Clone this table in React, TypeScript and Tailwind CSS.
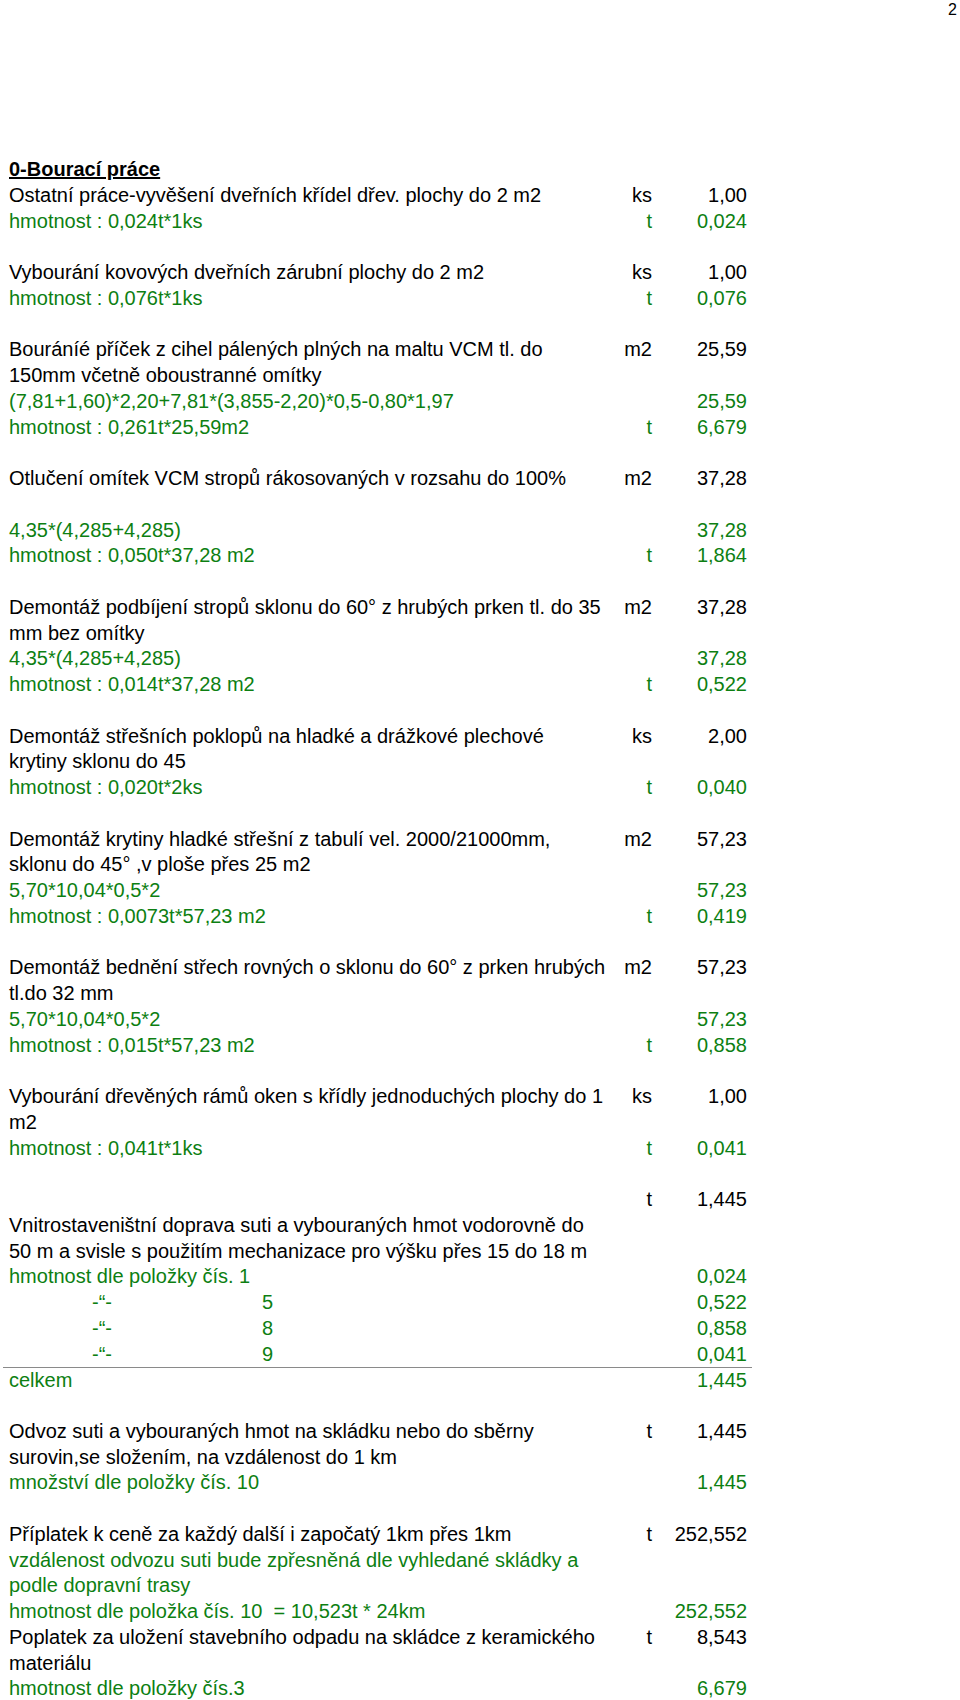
import React from 'react';

interface Row {
  t?: React.ReactNode;
  u?: string;
  v?: string;
  g?: boolean;
  total?: boolean;
}

const ditto = (n: string) => (
  <span className="flex">
    <span className="ml-[83px] w-[170px]">-“-</span>
    <span>{n}</span>
  </span>
);

const blocks: Row[][] = [
  [
    { t: 'Ostatní práce-vyvěšení dveřních křídel dřev. plochy do 2 m2', u: 'ks', v: '1,00' },
    { t: 'hmotnost : 0,024t*1ks', u: 't', v: '0,024', g: true },
  ],
  [
    { t: 'Vybourání kovových dveřních zárubní plochy do 2 m2', u: 'ks', v: '1,00' },
    { t: 'hmotnost : 0,076t*1ks', u: 't', v: '0,076', g: true },
  ],
  [
    { t: 'Bouráníé příček z cihel pálených plných na maltu VCM tl. do', u: 'm2', v: '25,59' },
    { t: '150mm včetně oboustranné omítky' },
    { t: '(7,81+1,60)*2,20+7,81*(3,855-2,20)*0,5-0,80*1,97', v: '25,59', g: true },
    { t: 'hmotnost : 0,261t*25,59m2', u: 't', v: '6,679', g: true },
  ],
  [
    { t: 'Otlučení omítek VCM stropů rákosovaných v rozsahu do 100%', u: 'm2', v: '37,28' },
    {},
    { t: '4,35*(4,285+4,285)', v: '37,28', g: true },
    { t: 'hmotnost : 0,050t*37,28 m2', u: 't', v: '1,864', g: true },
  ],
  [
    { t: 'Demontáž podbíjení stropů sklonu do 60° z hrubých prken tl. do 35', u: 'm2', v: '37,28' },
    { t: 'mm bez omítky' },
    { t: '4,35*(4,285+4,285)', v: '37,28', g: true },
    { t: 'hmotnost : 0,014t*37,28 m2', u: 't', v: '0,522', g: true },
  ],
  [
    { t: 'Demontáž střešních poklopů na hladké a drážkové plechové', u: 'ks', v: '2,00' },
    { t: 'krytiny sklonu do 45' },
    { t: 'hmotnost : 0,020t*2ks', u: 't', v: '0,040', g: true },
  ],
  [
    { t: 'Demontáž krytiny hladké střešní z tabulí vel. 2000/21000mm,', u: 'm2', v: '57,23' },
    { t: 'sklonu do 45° ,v ploše přes 25 m2' },
    { t: '5,70*10,04*0,5*2', v: '57,23', g: true },
    { t: 'hmotnost : 0,0073t*57,23 m2', u: 't', v: '0,419', g: true },
  ],
  [
    { t: 'Demontáž bednění střech rovných o sklonu do 60° z prken hrubých', u: 'm2', v: '57,23' },
    { t: 'tl.do 32 mm' },
    { t: '5,70*10,04*0,5*2', v: '57,23', g: true },
    { t: 'hmotnost : 0,015t*57,23 m2', u: 't', v: '0,858', g: true },
  ],
  [
    { t: 'Vybourání dřevěných rámů oken s křídly jednoduchých plochy do 1', u: 'ks', v: '1,00' },
    { t: 'm2' },
    { t: 'hmotnost : 0,041t*1ks', u: 't', v: '0,041', g: true },
  ],
  [
    { u: 't', v: '1,445' },
    { t: 'Vnitrostaveništní doprava suti a vybouraných hmot vodorovně do' },
    { t: '50 m a svisle s použitím mechanizace pro výšku přes 15 do 18 m' },
    { t: 'hmotnost dle položky čís. 1', v: '0,024', g: true },
    { t: ditto('5'), v: '0,522', g: true },
    { t: ditto('8'), v: '0,858', g: true },
    { t: ditto('9'), v: '0,041', g: true },
    { t: 'celkem', v: '1,445', g: true, total: true },
  ],
  [
    { t: 'Odvoz suti a vybouraných hmot na skládku nebo do sběrny', u: 't', v: '1,445' },
    { t: 'surovin,se složením, na vzdálenost do 1 km' },
    { t: 'množství dle položky čís. 10', v: '1,445', g: true },
  ],
  [
    { t: 'Příplatek k ceně za každý další i započatý 1km přes 1km', u: 't', v: '252,552' },
    { t: 'vzdálenost odvozu suti bude zpřesněná dle vyhledané skládky a', g: true },
    { t: 'podle dopravní trasy', g: true },
    { t: 'hmotnost dle položka čís. 10  = 10,523t * 24km', v: '252,552', g: true },
    { t: 'Poplatek za uložení stavebního odpadu na skládce z keramického', u: 't', v: '8,543' },
    { t: 'materiálu' },
    { t: 'hmotnost dle položky čís.3', v: '6,679', g: true },
  ],
];

function Line({ row }: { row: Row }) {
  return (
    <div
      className={`grid grid-cols-[minmax(0,1fr)_60px_95px] h-[25.75px] pl-[6px] pr-[5px] ${
        row.g ? 'text-[#0d7f12]' : 'text-black'
      } ${row.total ? 'border-t border-[#8a8a8a]' : ''}`}
    >
      <div className="whitespace-pre min-w-0">{row.t}</div>
      <div className="text-right">{row.u}</div>
      <div className="text-right">{row.v}</div>
    </div>
  );
}

export default function App() {
  return (
    <div className="w-[960px] min-h-[1700px] bg-white font-['Liberation_Sans',Arial,sans-serif] text-black">
      <div className="flex justify-end pr-[3px] pt-[1px] text-[16px] leading-[17px]">2</div>
      <div className="mt-[139px] w-[752px] pl-[3px] text-[20px] leading-[25.75px]">
        <div className="pl-[6px] h-[25.75px] font-bold underline">0-Bourací práce</div>
        {blocks.map((block, i) => (
          <div key={i} className={i > 0 ? 'mt-[25.75px]' : ''}>
            {block.map((row, j) => (
              <Line key={j} row={row} />
            ))}
          </div>
        ))}
      </div>
    </div>
  );
}
